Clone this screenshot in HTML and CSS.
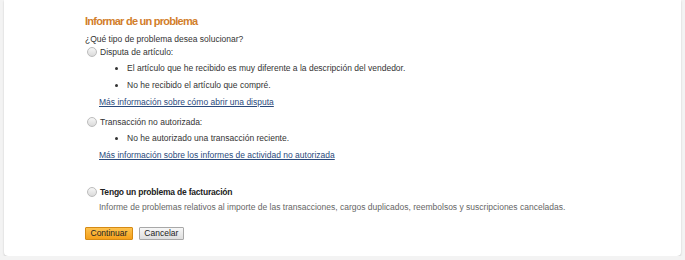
FILE: index.html
```html
<!DOCTYPE html>
<html lang="es">
<head>
    <meta charset="UTF-8">
    <title>Informar de un problema</title>
    <link rel="stylesheet" href="styles.css">
</head>
<body>
    <div class="panel">
        <h2>Informar de un problema</h2>
        <p class="question">¿Qué tipo de problema desea solucionar?</p>

        <div class="option">
            <label><span class="radio"></span>Disputa de artículo:</label>
            <ul>
                <li>El artículo que he recibido es muy diferente a la descripción del vendedor.</li>
                <li>No he recibido el artículo que compré.</li>
            </ul>
            <a href="#">Más información sobre cómo abrir una disputa</a>
        </div>

        <div class="option">
            <label><span class="radio"></span>Transacción no autorizada:</label>
            <ul>
                <li>No he autorizado una transacción reciente.</li>
            </ul>
            <a href="#">Más información sobre los informes de actividad no autorizada</a>
        </div>

        <div class="option billing">
            <label><span class="radio"></span><strong>Tengo un problema de facturación</strong></label>
            <p class="hint">Informe de problemas relativos al importe de las transacciones, cargos duplicados, reembolsos y suscripciones canceladas.</p>
        </div>

        <div class="actions">
            <button class="btn primary">Continuar</button>
            <button class="btn">Cancelar</button>
        </div>
    </div>
</body>
</html>
```
FILE: styles.css
```css
* {
    margin: 0;
    padding: 0;
    box-sizing: border-box;
}

body {
    font-family: 'Liberation Sans', Arial, sans-serif;
    font-size: 8.5px;
    color: #333;
    background: #f3f3f3;
    padding: 0 4px;
}

.panel {
    background: #fff;
    height: 256px;
    border-radius: 0 0 4px 4px;
    box-shadow: 0 1px 2px rgba(0, 0, 0, 0.18);
    padding: 14px 0 0 81px;
}

h2 {
    font-size: 11px;
    line-height: 14px;
    letter-spacing: -0.75px;
    font-weight: bold;
    color: #d27e2b;
    margin-bottom: 5.5px;
}

.question {
    line-height: 11px;
    margin-bottom: 1px;
}

.option label {
    display: flex;
    align-items: center;
    line-height: 12px;
}

.radio {
    width: 10px;
    height: 10px;
    border-radius: 50%;
    border: 1px solid #bcbcbc;
    background: linear-gradient(#f6f6f6, #dadada);
    margin: 0 3px 0 2px;
}

.option ul {
    list-style: disc;
    margin: 5.5px 0 5.5px 42px;
}

.option li {
    line-height: 11px;
}

.option li + li {
    margin-top: 6px;
}

.option a {
    display: block;
    margin: 0 0 8px 14px;
    color: #2a4a7d;
    line-height: 11px;
}

.billing {
    margin-top: 25.5px;
}

.billing strong {
    color: #222;
    letter-spacing: -0.2px;
}

.hint {
    color: #666;
    line-height: 11px;
    margin: 3.5px 0 0 14px;
}

.actions {
    display: flex;
    gap: 6px;
    margin-top: 14px;
}

.btn {
    font-family: inherit;
    font-size: 8.5px;
    color: #222;
    height: 13px;
    padding: 0 4.5px;
    border: 1px solid #a8a8a8;
    background: linear-gradient(#f7f7f7, #dedede);
    border-radius: 1px;
}

.btn.primary {
    border-color: #d58a14;
    background: linear-gradient(#fdc24f, #f5a01a);
}
```
